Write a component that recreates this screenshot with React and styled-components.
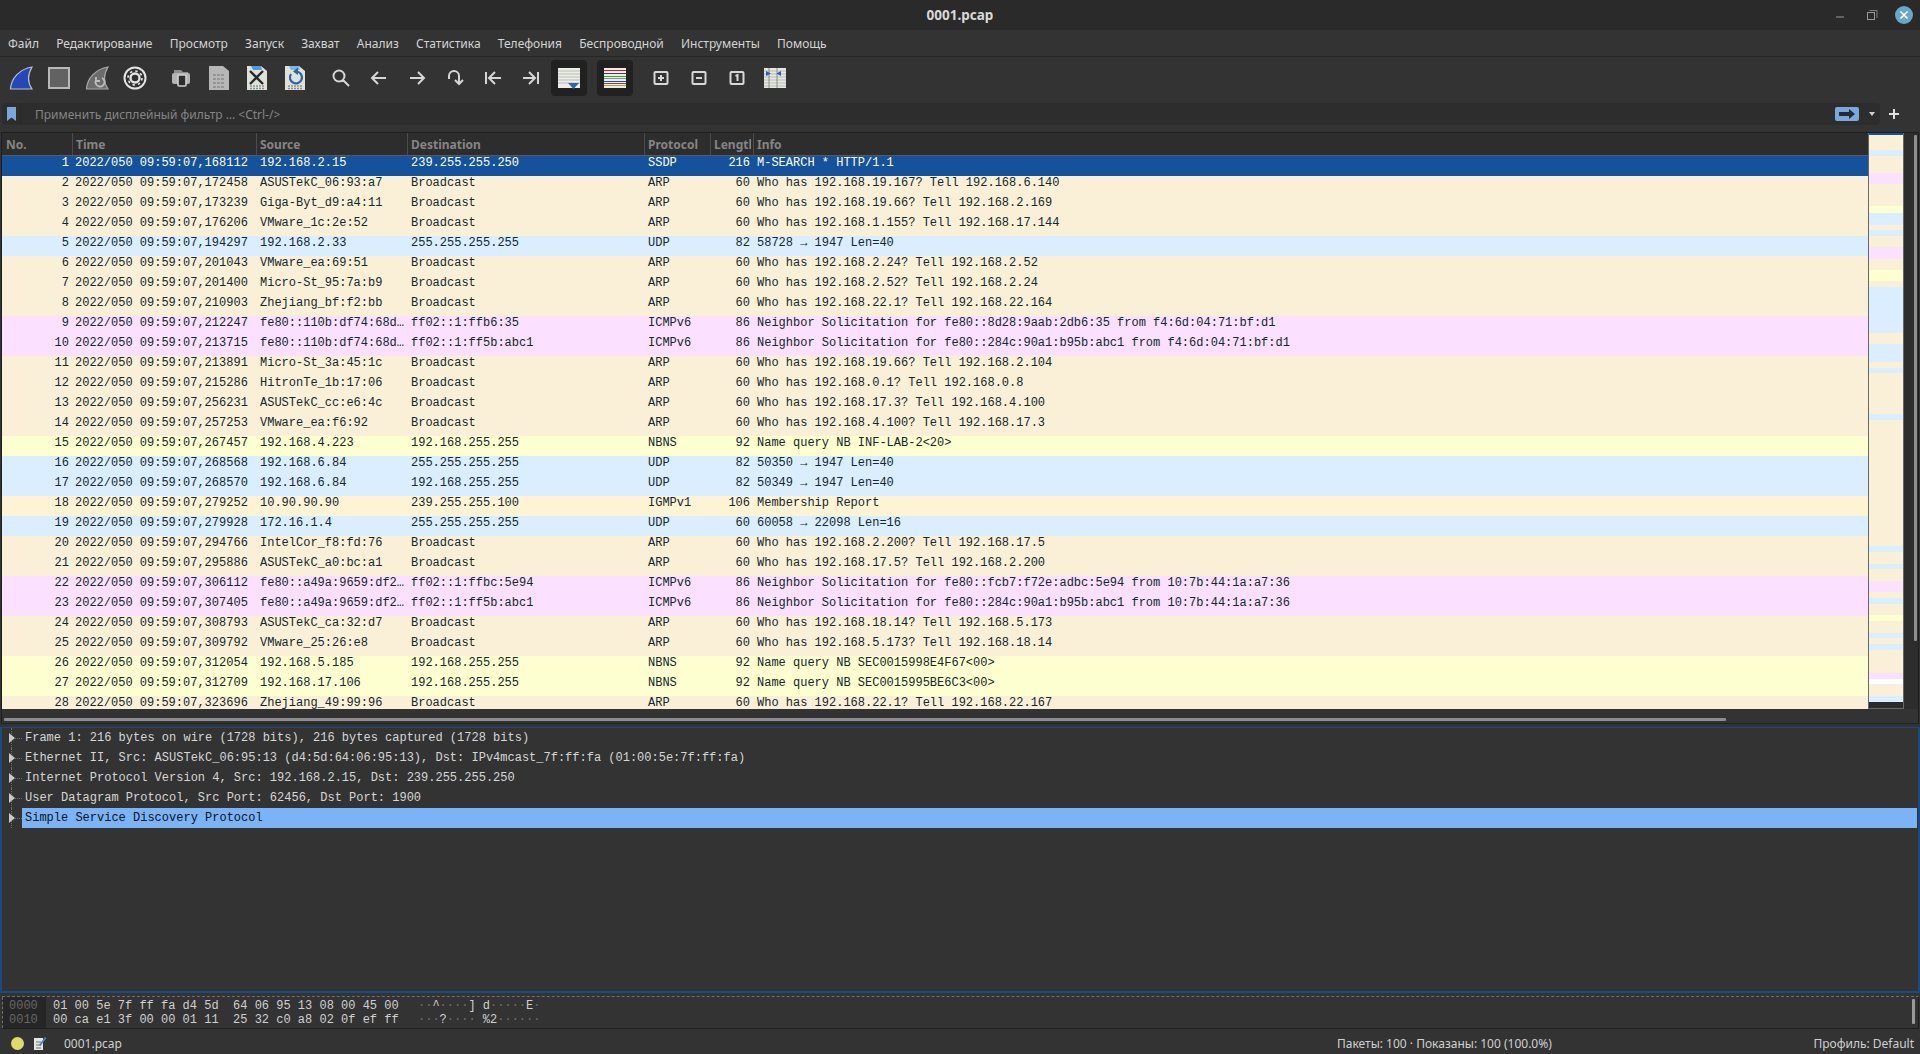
import * as React from "react"
import styled, { createGlobalStyle } from "styled-components"

const GlobalStyle = createGlobalStyle`
  html, body {
    margin: 0;
    padding: 0;
    background: #333333;
  }
  * {
    box-sizing: border-box;
  }
`;

const UI_FONT = `"Noto Sans", "Liberation Sans", sans-serif`;
const MONO_FONT = `"Liberation Mono", "DejaVu Sans Mono", monospace`;

const COLORS = {
  arp: "#faf0d7",
  udp: "#daeeff",
  icmp: "#fce0ff",
  nbns: "#feffd0",
  igmp: "#fff3d6",
  sel: "#16529c",
};

const Page = styled.div`
  width: 1920px;
  height: 1054px;
  display: flex;
  flex-direction: column;
  overflow: hidden;
  background: #333333;
  font-family: ${UI_FONT};
`;

const TitleBar = styled.div`
  height: 30px;
  flex: none;
  background: #2a2a2a;
  display: flex;
  align-items: center;
  justify-content: center;
  position: relative;
`;

const Title = styled.div`
  font-size: 13.5px;
  font-weight: 700;
  color: #d8d8d8;
`;

const WinButtons = styled.div`
  position: absolute;
  right: 6px;
  top: 0;
  height: 30px;
  display: flex;
  align-items: center;
  gap: 14px;
`;

const WinIcon = styled.svg`
  display: block;
  width: 20px;
  height: 20px;
`;

const MenuBar = styled.div`
  height: 27px;
  flex: none;
  display: flex;
  align-items: center;
  padding-left: 8px;
  gap: 17.2px;
  border-bottom: 1px solid #262626;
`;

const MenuItem = styled.span`
  font-size: 12px;
  color: #d4d4d4;
`;

const ToolBar = styled.div`
  height: 46px;
  flex: none;
  display: flex;
  align-items: flex-start;
  padding: 3px 0 0 2px;
`;

const ToolSlot = styled.div`
  width: 38px;
  height: 36px;
  display: flex;
  align-items: center;
  justify-content: center;
`;

const ToolGap = styled.div`
  width: 8px;
  height: 36px;
`;

const ActiveTool = styled.div`
  width: 36px;
  height: 36px;
  border-radius: 4px;
  background: #212121;
  display: flex;
  align-items: center;
  justify-content: center;
`;

const FilterRow = styled.div`
  height: 29px;
  flex: none;
  display: flex;
  align-items: flex-start;
  padding-left: 2px;
`;

const FilterBox = styled.div`
  width: 1878px;
  height: 22px;
  border-radius: 4px;
  background: #2d2d2d;
  display: flex;
  align-items: center;
  padding-right: 3px;
`;

const BookmarkCell = styled.div`
  width: 19px;
  height: 22px;
  flex: none;
  display: flex;
  align-items: center;
  justify-content: center;
  border-right: 1px solid #282828;
`;

const FilterHint = styled.div`
  flex: 1;
  padding-left: 14px;
  font-size: 12px;
  color: #858585;
`;

const ApplyButton = styled.div`
  width: 24px;
  height: 14px;
  border-radius: 2px;
  background: #7aa8dc;
  display: flex;
  align-items: center;
  justify-content: center;
`;

const FilterCaret = styled.div`
  margin-left: 10px;
  margin-right: 2px;
  width: 0;
  height: 0;
  border-left: 3.5px solid transparent;
  border-right: 3.5px solid transparent;
  border-top: 4px solid #d0d0d0;
`;

const AddFilter = styled.div`
  width: 28px;
  height: 22px;
  display: flex;
  align-items: center;
  justify-content: center;
`;

const PacketPane = styled.div`
  height: 592px;
  flex: none;
  margin: 0 1px;
  border: 1px solid #1e1e1e;
  border-bottom-color: #222222;
  display: flex;
  flex-direction: column;
`;

const PacketTop = styled.div`
  height: 576px;
  flex: none;
  display: flex;
`;

const ListColumn = styled.div`
  width: 1866px;
  flex: none;
  display: flex;
  flex-direction: column;
  overflow: hidden;
`;

const COLUMNS = "70px 184px 151px 237px 66px 43px 1fr";

const HeaderRow = styled.div`
  height: 23px;
  flex: none;
  display: grid;
  grid-template-columns: ${COLUMNS};
  background: #2d2d2d;
  border-bottom: 1px solid #5a5a5a;
`;

const HeaderCell = styled.div`
  height: 22px;
  padding: 0 0 0 ${(p) => (p.$first ? 4 : 3)}px;
  line-height: 23px;
  font-size: 12px;
  font-weight: 700;
  color: #858585;
  white-space: nowrap;
  overflow: hidden;
  border-left: ${(p) => (p.$first ? "none" : "1px solid #4c4c4c")};
  border-right: 2px solid #2d2d2d;
`;

const PacketRow = styled.div`
  height: 20px;
  flex: none;
  display: grid;
  grid-template-columns: ${COLUMNS};
  background: ${(p) => COLORS[p.$kind]};
  color: ${(p) => (p.$kind === "sel" ? "#ffffff" : "#12272e")};
  font-family: ${MONO_FONT};
  font-size: 12px;
  line-height: 15px;
`;

const Cell = styled.div`
  padding: ${(p) => (p.$right ? "0 3px 0 0" : `0 0 0 ${p.$tight ? 3 : 4}px`)};
  text-align: ${(p) => (p.$right ? "right" : "left")};
  white-space: pre;
  overflow: hidden;
`;

const Minimap = styled.div`
  width: 36px;
  flex: none;
  height: 576px;
  background: #2b2b2b;
  border: 1px solid #686868;
  border-top: none;
  display: flex;
  flex-direction: column;
`;

const Stripe = styled.div`
  flex: none;
  height: ${(p) => p.$h}px;
  background: ${(p) => p.$c};
`;

const VTrack = styled.div`
  flex: 1;
  background: #2d2d2d;
  padding: 2px 0 0 10px;
`;

const VThumb = styled.div`
  width: 3px;
  height: 506px;
  background: #8e8e8e;
  border-radius: 1px;
`;

const HTrack = styled.div`
  flex: 1;
  padding: 9px 0 0 2px;
  display: flex;
`;

const HThumb = styled.div`
  width: 1722px;
  height: 3px;
  background: #8e8e8e;
  border-radius: 1px;
`;

const DetailPane = styled.div`
  height: 266px;
  flex: none;
  margin-top: 3px;
  border: 2px solid #1b4a80;
  border-top-width: 1px;
  padding: 0 1px 0 0;
`;

const TreeRow = styled.div`
  height: 20px;
  display: flex;
  align-items: center;
  position: relative;
`;

const TreeGutter = styled.div`
  width: 20px;
  height: 20px;
  flex: none;
  position: relative;
  &::before {
    content: "";
    position: absolute;
    left: 9px;
    top: 0;
    bottom: 0;
    border-left: 1px dotted #6a6a6a;
  }
  &::after {
    content: "";
    position: absolute;
    left: 13px;
    width: 7px;
    top: 10px;
    border-top: 1px dotted #6a6a6a;
  }
`;

const Expander = styled.div`
  position: absolute;
  z-index: 1;
  left: 7px;
  top: 5px;
  width: 0;
  height: 0;
  border-top: 5px solid transparent;
  border-bottom: 5px solid transparent;
  border-left: 6px solid #c8c8c8;
`;

const TreeText = styled.div`
  flex: 1;
  height: 20px;
  padding-left: 3px;
  font-family: ${MONO_FONT};
  font-size: 12px;
  line-height: 21px;
  color: ${(p) => (p.$active ? "#0a1420" : "#d6d6d6")};
  background: ${(p) => (p.$active ? "#7cb3f5" : "transparent")};
`;

const HexPane = styled.div`
  height: 33px;
  flex: none;
  margin: 3px 1px 0 2px;
  border-top: 1px dashed #6e6e6e;
  border-bottom: 1px solid #1e1e1e;
  border-right: 1px solid #1e1e1e;
  display: flex;
  font-family: ${MONO_FONT};
  font-size: 12px;
  line-height: 14px;
  white-space: pre;
`;

const HexOffsets = styled.div`
  width: 44px;
  flex: none;
  background: #262626;
  border-left: 1px dashed #6e6e6e;
  color: #676767;
  padding: 2px 0 0 6px;
`;

const HexBytes = styled.div`
  width: 372px;
  flex: none;
  padding: 2px 0 0 7px;
  color: #d0d0d0;
`;

const HexAscii = styled.div`
  flex: 1;
  padding-top: 2px;
  color: #d0d0d0;
`;

const Dot = styled.span`
  color: #6f6f6f;
`;

const HexScroll = styled.div`
  width: 3px;
  height: 25px;
  margin: 2px 3px 0 0;
  background: #9a9a9a;
  border-radius: 1px;
`;

const StatusBar = styled.div`
  flex: 1;
  display: flex;
  align-items: center;
  font-size: 12px;
  color: #d0d0d0;
  padding: 3px 6px 0 11px;
`;

const StatusDot = styled.div`
  width: 13px;
  height: 13px;
  border-radius: 50%;
  background: #dedb6c;
  flex: none;
`;

const StatusFile = styled.div`
  margin-left: 17px;
  width: 1273px;
  flex: none;
`;

const StatusCount = styled.div`
  flex: 1;
`;

const Shark = ({ fill, stroke, children }) => (
  <svg width="24" height="24" viewBox="0 0 24 24">
    <path d="M1.500 23C2 12 11 3 23 1C19 8 18 16 23 23Z" fill={fill} stroke={stroke} strokeWidth="1.2" />
    {children}
  </svg>
);

const Stroke = ({ d, size = 20, width = 2 }) => (
  <svg width={size} height={size} viewBox="0 0 20 20" fill="none" stroke="#d6d6d6" strokeWidth={width}>
    <path d={d} />
  </svg>
);

const DocIcon = ({ children }) => (
  <svg width="20" height="24" viewBox="0 0 20 24">
    <path d="M0 0H14L20 5V24H0Z" fill="#dfe2d8" />
    <path d="M3 20H17M3 22.500H17" stroke="#88929a" strokeWidth="1.6" strokeDasharray="2 1" />
    {children}
  </svg>
);

const Lines = ({ colors }) => (
  <svg width="24" height="20" viewBox="0 0 24 20">
    <rect x="1" y="0" width="22" height="20" fill="#eceee8" />
    {colors.map(([c, y]) => (
      <rect key={y} x="1" y={y} width="22" height="1" fill={c} />
    ))}
  </svg>
);

const BoxIcon = ({ children }) => (
  <svg width="16" height="16" viewBox="0 0 16 16">
    <rect x="1.500" y="2" width="13" height="12" rx="1" fill="none" stroke="#d8d8d8" strokeWidth="2" />
    {children}
  </svg>
);

const MENU = ["Файл", "Редактирование", "Просмотр", "Запуск", "Захват", "Анализ", "Статистика", "Телефония", "Беспроводной", "Инструменты", "Помощь"];

const TOOLS = [
  <Shark fill="#2547b8" stroke="#b9c0cc" />,
  <svg width="22" height="22" viewBox="0 0 22 22"><rect x="1" y="1" width="20" height="20" fill="#626262" stroke="#b8b8b8" strokeWidth="2" /></svg>,
  <Shark fill="#6c6c6c" stroke="#a8a8a8"><path d="M11 14a4.500 4.500 0 1 0 6-2M11 11v4h4" fill="none" stroke="#bdbdbd" strokeWidth="1.800" /></Shark>,
  <svg width="24" height="24" viewBox="0 0 24 24"><circle cx="12" cy="12" r="10.500" fill="#303030" stroke="#e4e4e4" strokeWidth="2" /><circle cx="12" cy="12" r="4.500" fill="none" stroke="#e4e4e4" strokeWidth="2.400" /><circle cx="12" cy="12" r="7" fill="none" stroke="#e4e4e4" strokeWidth="1.600" strokeDasharray="2.500 3" /></svg>,
  null,
  <svg width="18" height="17" viewBox="0 0 18 17"><path d="M2 0H9L11 2H16V4H2Z" fill="#8e8e8e" /><rect x="0" y="3" width="18" height="11" rx="2" fill="#b4b4b4" /><rect x="6" y="5" width="8" height="11" rx="1" fill="#2e2e2e" stroke="#d0d0d0" strokeWidth="1.600" /></svg>,
  <svg width="20" height="24" viewBox="0 0 20 24"><path d="M0 0H14L20 5V24H0Z" fill="#b6b6b6" /><path d="M4 9H16M4 13H16M4 17H16M4 21H16" stroke="#8a8a8a" strokeWidth="1.600" strokeDasharray="3 1" /></svg>,
  <DocIcon><path d="M4 0H14L15 4H6Z" fill="#4f9ad8" /><path d="M3 5L16 18M16 5L3 18" stroke="#26282a" strokeWidth="2.400" /></DocIcon>,
  <DocIcon><path d="M4 0H14L15 4H6Z" fill="#7fb5e0" /><path d="M6 8a6 6 0 1 0 6-2.500" fill="none" stroke="#2c62a8" strokeWidth="2.200" /><path d="M13 1.500L8 5.500L13 9Z" fill="#2c62a8" /></DocIcon>,
  null,
  <Stroke d="M12 12L18 18M13.500 8A5.500 5.500 0 1 1 2.500 8A5.500 5.500 0 1 1 13.500 8Z" />,
  <Stroke d="M17 10H3M9 4L3 10L9 16" />,
  <Stroke d="M3 10H17M11 4L17 10L11 16" />,
  <Stroke d="M4 11V8A5 5 0 0 1 14 8V15M10 12L14 16L18 12" />,
  <Stroke d="M3 4V16M18 10H7M12 4L6 10L12 16" />,
  <Stroke d="M17 4V16M2 10H13M8 4L14 10L8 16" />,
  <ActiveTool>
    <svg width="24" height="21" viewBox="0 0 24 21">
      <rect x="1" y="0" width="22" height="20" fill="#eceee8" />
      <path d="M1 3H23M1 6H23M1 9H23M1 12H23M1 15H23" stroke="#b9bcb6" />
      <path d="M16.500 21L11 15H22Z" fill="#2f65aa" />
    </svg>
  </ActiveTool>,
  null,
  <ActiveTool><Lines colors={[["#d11a1a", 2], ["#3c3c6c", 5], ["#3aa52a", 8], ["#8c8c8c", 10], ["#2c52a8", 13], ["#7c3f98", 15], ["#c89b1e", 17]]} /></ActiveTool>,
  null,
  <BoxIcon><path d="M8 5V11M5 8H11" stroke="#d8d8d8" strokeWidth="2" /></BoxIcon>,
  <BoxIcon><path d="M5 8H11" stroke="#d8d8d8" strokeWidth="2" /></BoxIcon>,
  <BoxIcon><path d="M6.500 6L8.500 5V11" fill="none" stroke="#d8d8d8" strokeWidth="2" /></BoxIcon>,
  <svg width="24" height="20" viewBox="0 0 24 20">
    <rect x="1" y="0" width="22" height="20" fill="#e6e8e2" />
    <path d="M1 3H23M1 6H23M1 9H23M1 12H23M1 15H23M1 18H23" stroke="#b9bcb6" />
    <path d="M6 0V20M14 0V20" stroke="#8c8c8c" />
    <path d="M3 3L8 5.500L3 8ZM18 3L13.500 5.500L18 8Z" fill="#2c62a8" />
  </svg>,
];

const arp = (n, t, src, who, tell) => ["arp", n, t, src, "Broadcast", "ARP", "60", `Who has ${who}? Tell ${tell}`];

const ROWS = [
  ["sel", 1, "168112", "192.168.2.15", "239.255.255.250", "SSDP", "216", "M-SEARCH * HTTP/1.1"],
  arp(2, "172458", "ASUSTekC_06:93:a7", "192.168.19.167", "192.168.6.140"),
  arp(3, "173239", "Giga-Byt_d9:a4:11", "192.168.19.66", "192.168.2.169"),
  arp(4, "176206", "VMware_1c:2e:52", "192.168.1.155", "192.168.17.144"),
  ["udp", 5, "194297", "192.168.2.33", "255.255.255.255", "UDP", "82", "58728 → 1947 Len=40"],
  arp(6, "201043", "VMware_ea:69:51", "192.168.2.24", "192.168.2.52"),
  arp(7, "201400", "Micro-St_95:7a:b9", "192.168.2.52", "192.168.2.24"),
  arp(8, "210903", "Zhejiang_bf:f2:bb", "192.168.22.1", "192.168.22.164"),
  ["icmp", 9, "212247", "fe80::110b:df74:68d…", "ff02::1:ffb6:35", "ICMPv6", "86", "Neighbor Solicitation for fe80::8d28:9aab:2db6:35 from f4:6d:04:71:bf:d1"],
  ["icmp", 10, "213715", "fe80::110b:df74:68d…", "ff02::1:ff5b:abc1", "ICMPv6", "86", "Neighbor Solicitation for fe80::284c:90a1:b95b:abc1 from f4:6d:04:71:bf:d1"],
  arp(11, "213891", "Micro-St_3a:45:1c", "192.168.19.66", "192.168.2.104"),
  arp(12, "215286", "HitronTe_1b:17:06", "192.168.0.1", "192.168.0.8"),
  arp(13, "256231", "ASUSTekC_cc:e6:4c", "192.168.17.3", "192.168.4.100"),
  arp(14, "257253", "VMware_ea:f6:92", "192.168.4.100", "192.168.17.3"),
  ["nbns", 15, "267457", "192.168.4.223", "192.168.255.255", "NBNS", "92", "Name query NB INF-LAB-2<20>"],
  ["udp", 16, "268568", "192.168.6.84", "255.255.255.255", "UDP", "82", "50350 → 1947 Len=40"],
  ["udp", 17, "268570", "192.168.6.84", "192.168.255.255", "UDP", "82", "50349 → 1947 Len=40"],
  ["igmp", 18, "279252", "10.90.90.90", "239.255.255.100", "IGMPv1", "106", "Membership Report"],
  ["udp", 19, "279928", "172.16.1.4", "255.255.255.255", "UDP", "60", "60058 → 22098 Len=16"],
  arp(20, "294766", "IntelCor_f8:fd:76", "192.168.2.200", "192.168.17.5"),
  arp(21, "295886", "ASUSTekC_a0:bc:a1", "192.168.17.5", "192.168.2.200"),
  ["icmp", 22, "306112", "fe80::a49a:9659:df2…", "ff02::1:ffbc:5e94", "ICMPv6", "86", "Neighbor Solicitation for fe80::fcb7:f72e:adbc:5e94 from 10:7b:44:1a:a7:36"],
  ["icmp", 23, "307405", "fe80::a49a:9659:df2…", "ff02::1:ff5b:abc1", "ICMPv6", "86", "Neighbor Solicitation for fe80::284c:90a1:b95b:abc1 from 10:7b:44:1a:a7:36"],
  arp(24, "308793", "ASUSTekC_ca:32:d7", "192.168.18.14", "192.168.5.173"),
  arp(25, "309792", "VMware_25:26:e8", "192.168.5.173", "192.168.18.14"),
  ["nbns", 26, "312054", "192.168.5.185", "192.168.255.255", "NBNS", "92", "Name query NB SEC0015998E4F67<00>"],
  ["nbns", 27, "312709", "192.168.17.106", "192.168.255.255", "NBNS", "92", "Name query NB SEC0015995BE6C3<00>"],
  arp(28, "323696", "Zhejiang_49:99:96", "192.168.22.1", "192.168.22.167"),
];

// minimap bands, heights in px from the top of the list
const B = "#faf0d7", U = "#daeeff", P = "#fce0ff", Y = "#feffd0";
const BANDS = [
  ["#16529c", 2], [B, 15], [U, 6], [B, 17], [P, 11], [B, 22], [Y, 7], [U, 12], [B, 5], [U, 6],
  [B, 11], [P, 12], [B, 11], [Y, 11], [B, 6], [U, 46], [B, 11], [U, 18], [B, 6], [U, 5],
  [B, 41], [U, 6], [B, 126], [U, 6], [B, 12], [U, 5], [B, 12], [P, 11], [B, 6], [U, 6],
  [B, 11], [Y, 6], [B, 12], [U, 5], [B, 6], [U, 6], [B, 23], [P, 6], ["#ffffff", 5], [B, 12], [U, 6],
];

const TREE = [
  "Frame 1: 216 bytes on wire (1728 bits), 216 bytes captured (1728 bits)",
  "Ethernet II, Src: ASUSTekC_06:95:13 (d4:5d:64:06:95:13), Dst: IPv4mcast_7f:ff:fa (01:00:5e:7f:ff:fa)",
  "Internet Protocol Version 4, Src: 192.168.2.15, Dst: 239.255.255.250",
  "User Datagram Protocol, Src Port: 62456, Dst Port: 1900",
  "Simple Service Discovery Protocol",
];

const Ascii = ({ text }) =>
  text.split("").map((ch, i) => (ch === "·" ? <Dot key={i}>·</Dot> : ch));

export default () => {
  return (
    <Page>
      <GlobalStyle />
      <TitleBar>
        <Title>0001.pcap</Title>
        <WinButtons>
          <WinIcon viewBox="0 0 20 20"><path d="M10 12H18" stroke="#9a9a9a" strokeWidth="1" /></WinIcon>
          <WinIcon viewBox="0 0 20 20"><path d="M9.500 5.500H17V13" fill="none" stroke="#7e7e7e" /><rect x="7.500" y="7.500" width="7" height="7" fill="none" stroke="#9a9a9a" /></WinIcon>
          <WinIcon viewBox="0 0 20 20"><circle cx="10" cy="10" r="9" fill="#6ba6c7" /><path d="M6.500 6.500L13.500 13.500M13.500 6.500L6.500 13.500" stroke="#ffffff" strokeWidth="1.600" /></WinIcon>
        </WinButtons>
      </TitleBar>
      <MenuBar>
        {MENU.map((m) => (
          <MenuItem key={m}>{m}</MenuItem>
        ))}
      </MenuBar>
      <ToolBar>
        {TOOLS.map((t, i) => (t ? <ToolSlot key={i}>{t}</ToolSlot> : <ToolGap key={i} />))}
      </ToolBar>
      <FilterRow>
        <FilterBox>
          <BookmarkCell>
            <svg width="9" height="14" viewBox="0 0 9 14"><path d="M0 0H9V14L4.500 10.500L0 14Z" fill="#7aa8dc" /></svg>
          </BookmarkCell>
          <FilterHint>Применить дисплейный фильтр … &lt;Ctrl-/&gt;</FilterHint>
          <ApplyButton>
            <svg width="18" height="10" viewBox="0 0 18 10"><path d="M1 3H11V0L17 5L11 10V7H1Z" fill="#222b36" /></svg>
          </ApplyButton>
          <FilterCaret />
        </FilterBox>
        <AddFilter>
          <svg width="10" height="10" viewBox="0 0 10 10"><path d="M5 0V10M0 5H10" stroke="#e0e0e0" strokeWidth="2" /></svg>
        </AddFilter>
      </FilterRow>
      <PacketPane>
        <PacketTop>
          <ListColumn>
            <HeaderRow>
              <HeaderCell $first>No.</HeaderCell>
              <HeaderCell>Time</HeaderCell>
              <HeaderCell>Source</HeaderCell>
              <HeaderCell>Destination</HeaderCell>
              <HeaderCell>Protocol</HeaderCell>
              <HeaderCell>Length</HeaderCell>
              <HeaderCell>Info</HeaderCell>
            </HeaderRow>
            {ROWS.map(([kind, no, t, src, dst, proto, len, info]) => (
              <PacketRow key={no} $kind={kind}>
                <Cell $right>{no}</Cell>
                <Cell $tight>{`2022/050 09:59:07,${t}`}</Cell>
                <Cell>{src}</Cell>
                <Cell>{dst}</Cell>
                <Cell>{proto}</Cell>
                <Cell $right>{len}</Cell>
                <Cell>{info}</Cell>
              </PacketRow>
            ))}
          </ListColumn>
          <Minimap>
            {BANDS.map(([c, h], i) => (
              <Stripe key={i} $c={c} $h={h} />
            ))}
          </Minimap>
          <VTrack>
            <VThumb />
          </VTrack>
        </PacketTop>
        <HTrack>
          <HThumb />
        </HTrack>
      </PacketPane>
      <DetailPane>
        {TREE.map((line, i) => (
          <TreeRow key={line}>
            <TreeGutter><Expander /></TreeGutter>
            <TreeText $active={i === TREE.length - 1}>{line}</TreeText>
          </TreeRow>
        ))}
      </DetailPane>
      <HexPane>
        <HexOffsets>{"0000\n0010"}</HexOffsets>
        <HexBytes>{"01 00 5e 7f ff fa d4 5d  64 06 95 13 08 00 45 00\n00 ca e1 3f 00 00 01 11  25 32 c0 a8 02 0f ef ff"}</HexBytes>
        <HexAscii>
          <Ascii text={"··^····] d·····E·\n···?···· %2······"} />
        </HexAscii>
        <HexScroll />
      </HexPane>
      <StatusBar>
        <StatusDot />
        <svg width="14" height="15" viewBox="0 0 14 15" style={{ marginLeft: 9, flex: "none" }}>
          <path d="M1 2H10V14H1Z" fill="#e4e6e0" />
          <path d="M3 6H8M3 9H8M3 12H8" stroke="#6a7680" />
          <path d="M6 9L12 1L13.500 2L7.500 10Z" fill="#4b7fb8" />
        </svg>
        <StatusFile>0001.pcap</StatusFile>
        <StatusCount>Пакеты: 100 · Показаны: 100 (100.0%)</StatusCount>
        <div>Профиль: Default</div>
      </StatusBar>
    </Page>
  );
};
